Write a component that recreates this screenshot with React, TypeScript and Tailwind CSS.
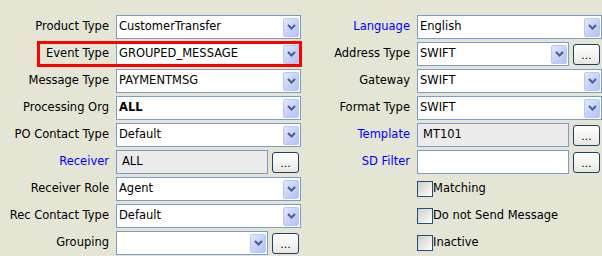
import type { ReactNode } from "react";

const FONT = "font-['DejaVu_Sans',sans-serif]";

function Chevron() {
  return (
    <svg width="9" height="6" viewBox="0 0 9 6" className="block">
      <path d="M1 1 L4.5 4.5 L8 1" fill="none" stroke="#4a5f8c" strokeWidth="2" />
    </svg>
  );
}

function ArrowButton() {
  return (
    <div className="flex h-[19px] w-[16px] items-center justify-center rounded-[2px] border border-[#b9c8f0] bg-gradient-to-br from-[#e2e8fc] via-[#c9d3fa] to-[#b3c3f2]">
      <Chevron />
    </div>
  );
}

function Combo({ value, width = "w-[185px]", bold = false }: { value: string; width?: string; bold?: boolean }) {
  return (
    <div className={`flex h-[24px] ${width} items-center border border-[#7b9ccb] bg-white pl-[2px] pr-[1px]`}>
      <span className={`flex-1 truncate text-[11.5px] text-black ${bold ? "font-bold" : ""}`}>{value}</span>
      <ArrowButton />
    </div>
  );
}

function TextBox({ value, width = "w-[152px]", grey = false }: { value: string; width?: string; grey?: boolean }) {
  return (
    <div
      className={`flex h-[24px] ${width} items-center border border-[#7b9ccb] pl-[5px] text-[11.5px] text-black ${
        grey ? "bg-[#ebebeb]" : "bg-white"
      }`}
    >
      {value}
    </div>
  );
}

function DotsButton() {
  return (
    <div className="flex h-[21px] w-[27px] items-end justify-center rounded-[3px] border border-[#1f3f6b] bg-gradient-to-b from-white to-[#e8e8e2] pb-[3px] text-[11px] leading-none text-black">
      ...
    </div>
  );
}

function Row({ label, blue = false, children }: { label: string; blue?: boolean; children: ReactNode }) {
  return (
    <div className="flex h-[24px] items-center">
      <div className={`w-[110px] pr-[1px] text-right text-[11.5px] ${blue ? "text-[#0000ff]" : "text-black"}`}>{label}</div>
      <div className="ml-[6px] flex items-center gap-[4px]">{children}</div>
    </div>
  );
}

function Check({ label }: { label: string }) {
  return (
    <div className="flex h-[24px] items-center pl-[116px]">
      <div className="h-[16px] w-[16px] border border-[#1c5180] bg-gradient-to-br from-[#cfcfc8] via-[#e6e6e2] to-white" />
      <span className="text-[11.5px] text-black">{label}</span>
    </div>
  );
}

export default function App() {
  return (
    <div className={`h-[256px] w-[602px] bg-[#e4e5d5] pt-[15px] ${FONT}`}>
      <div className="flex">
        <div className="flex w-[301px] flex-col gap-[3px]">
          <Row label="Product Type">
            <Combo value="CustomerTransfer" />
          </Row>
          <div className="relative">
            <Row label="Event Type">
              <Combo value="GROUPED_MESSAGE" />
            </Row>
            <div className="pointer-events-none absolute -top-[1px] -bottom-[1px] left-[37px] -right-[1px] border-[3px] border-[#ff0000]" />
          </div>
          <Row label="Message Type">
            <Combo value="PAYMENTMSG" />
          </Row>
          <Row label="Processing Org">
            <Combo value="ALL" bold />
          </Row>
          <Row label="PO Contact Type">
            <Combo value="Default" />
          </Row>
          <Row label="Receiver" blue>
            <TextBox value="ALL" grey />
            <DotsButton />
          </Row>
          <Row label="Receiver Role">
            <Combo value="Agent" />
          </Row>
          <Row label="Rec Contact Type">
            <Combo value="Default" />
          </Row>
          <Row label="Grouping">
            <Combo value="" width="w-[152px]" />
            <DotsButton />
          </Row>
        </div>
        <div className="flex w-[301px] flex-col gap-[3px]">
          <Row label="Language" blue>
            <Combo value="English" />
          </Row>
          <Row label="Address Type">
            <Combo value="SWIFT" width="w-[152px]" />
            <DotsButton />
          </Row>
          <Row label="Gateway">
            <Combo value="SWIFT" />
          </Row>
          <Row label="Format Type">
            <Combo value="SWIFT" />
          </Row>
          <Row label="Template" blue>
            <TextBox value="MT101" grey />
            <DotsButton />
          </Row>
          <Row label="SD Filter" blue>
            <TextBox value="" />
            <DotsButton />
          </Row>
          <Check label="Matching" />
          <Check label="Do not Send Message" />
          <Check label="Inactive" />
        </div>
      </div>
    </div>
  );
}
